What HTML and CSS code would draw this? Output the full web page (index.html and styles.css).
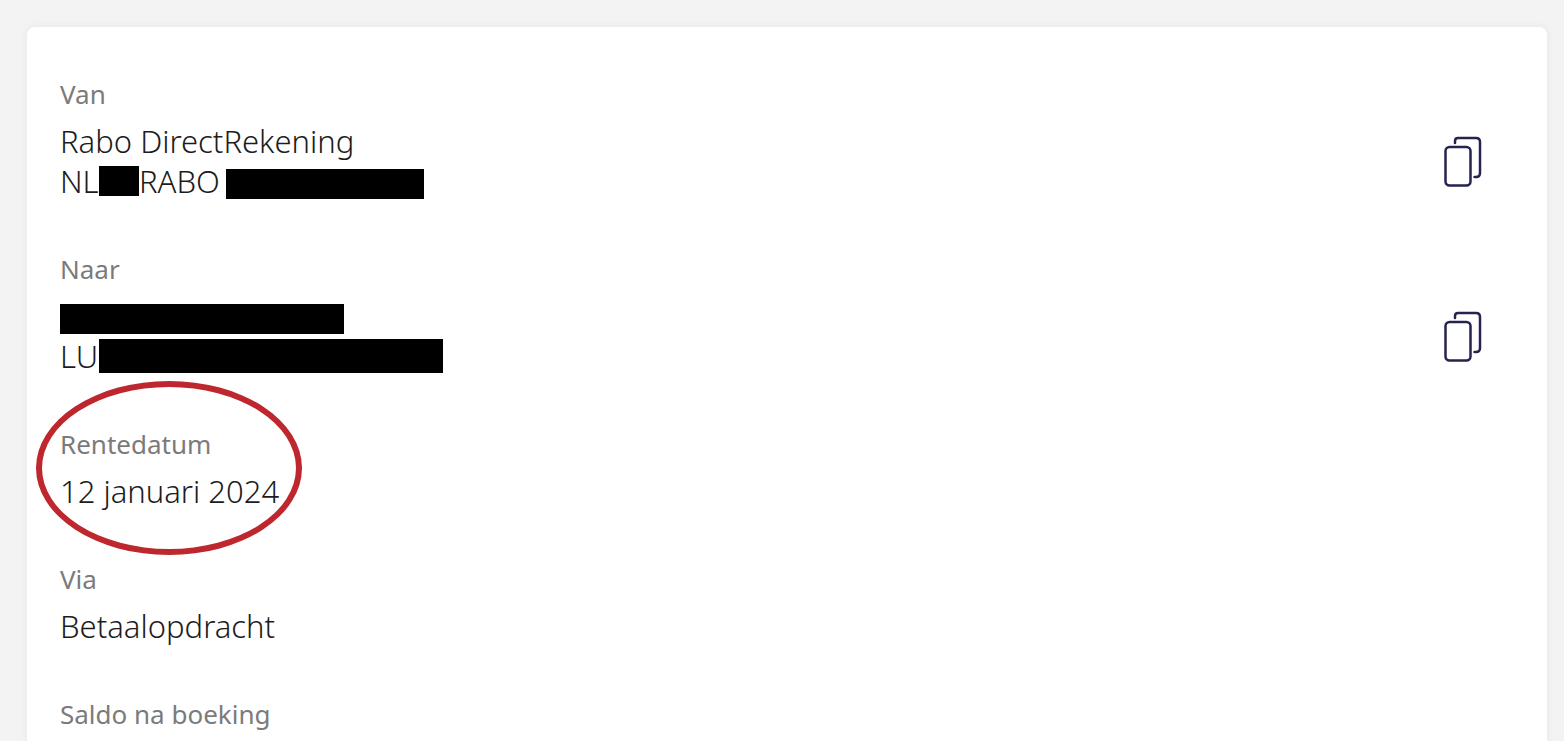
FILE: index.html
```html
<!DOCTYPE html>
<html lang="nl">
<head>
<meta charset="utf-8">
<meta name="viewport" content="width=device-width, initial-scale=1">
<title>Betaalopdracht</title>
<link rel="stylesheet" href="styles.css">
</head>
<body>
<main class="card">
  <section class="entry">
    <h2 class="label">Van</h2>
    <div class="content">
      <div class="lines">
        <p class="value">Rabo DirectRekening</p>
        <p class="value account"><span class="prefix">NL</span><span class="redacted country"></span><span class="bank">RABO</span><span class="redacted low number"></span></p>
      </div>
      <button class="copy" type="button" aria-label="Kopieer rekening van">
        <svg class="icon" viewBox="0 0 40 52" aria-hidden="true"><rect x="2.500" y="12" width="25" height="38.500" rx="4"/><path d="M12 8V6Q12 3 15 3H33Q37 3 37 7V38Q37 42 33 42H31.500"/></svg>
      </button>
    </div>
  </section>
  <section class="entry">
    <h2 class="label">Naar</h2>
    <div class="content">
      <div class="lines">
        <p class="value account"><span class="redacted low name"></span></p>
        <p class="value account"><span class="prefix">LU</span><span class="redacted iban"></span></p>
      </div>
      <button class="copy" type="button" aria-label="Kopieer rekening naar">
        <svg class="icon" viewBox="0 0 40 52" aria-hidden="true"><rect x="2.500" y="12" width="25" height="38.500" rx="4"/><path d="M12 8V6Q12 3 15 3H33Q37 3 37 7V38Q37 42 33 42H31.500"/></svg>
      </button>
    </div>
  </section>
  <section class="entry">
    <h2 class="label">Rentedatum</h2>
    <p class="value">12 januari 2024</p>
    <span class="ring"></span>
  </section>
  <section class="entry">
    <h2 class="label">Via</h2>
    <p class="value">Betaalopdracht</p>
  </section>
  <section class="entry">
    <h2 class="label">Saldo na boeking</h2>
  </section>
</main>
</body>
</html>
```
FILE: styles.css
```css
* {
  box-sizing: border-box;
}

body {
  margin: 0;
  padding: 27px 17px 0 27px;
  background: #f3f3f3;
  font-family: "Noto Sans", "Open Sans", sans-serif;
}

.card {
  display: flex;
  flex-direction: column;
  gap: 48px;
  min-height: calc(100vh - 27px);
  padding: 47px 64px 0 33px;
  border-radius: 8px 8px 0 0;
  background: #fff;
  box-shadow: 0 0 8px rgba(0, 0, 0, 0.06);
}

.entry {
  position: relative;
}

.content {
  display: flex;
  align-items: center;
  justify-content: space-between;
}

.label,
.value {
  margin: 0;
  line-height: 40px;
  white-space: nowrap;
}

.label {
  margin-bottom: 7px;
  color: #7b7b7b;
  font-size: 26px;
  font-weight: 400;
}

.value {
  color: #1c1c1c;
  font-size: 31px;
  font-weight: 300;
}

.account {
  display: flex;
  align-items: center;
  height: 40px;
}

.prefix {
  width: 39px;
}

.bank {
  width: 87px;
}

.redacted {
  height: 30px;
  background: #000;
}

.low {
  align-self: flex-end;
  margin-bottom: 2px;
}

.country {
  width: 40px;
}

.number {
  width: 198px;
}

.name {
  width: 284px;
}

.iban {
  width: 344px;
  height: 34px;
}

.copy {
  display: flex;
  padding: 0;
  border: 0;
  background: none;
}

.icon {
  width: 40px;
  height: 52px;
  fill: none;
  stroke: #25234f;
  stroke-width: 2.5;
  stroke-linecap: round;
}

.ring {
  position: absolute;
  top: -43px;
  left: -24px;
  width: 266px;
  height: 174px;
  border: 6px solid #bd272d;
  border-radius: 50%;
}
```
